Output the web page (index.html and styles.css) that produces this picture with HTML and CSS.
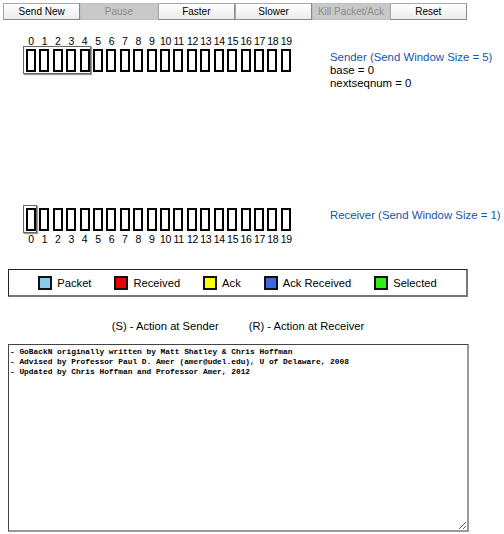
FILE: index.html
```html
<!DOCTYPE html>
<html>
<head>
<meta charset="utf-8">
<link rel="stylesheet" href="styles.css">
</head>
<body>
<div class="toolbar">
  <button class="btn">Send New</button>
  <button class="btn off">Pause</button>
  <button class="btn">Faster</button>
  <button class="btn">Slower</button>
  <button class="btn off">Kill Packet/Ack</button>
  <button class="btn">Reset</button>
</div>

<div class="panel sender">
  <div class="slots">
    <div class="nums">
      <span>0</span><span>1</span><span>2</span><span>3</span><span>4</span><span>5</span><span>6</span><span>7</span><span>8</span><span>9</span><span>10</span><span>11</span><span>12</span><span>13</span><span>14</span><span>15</span><span>16</span><span>17</span><span>18</span><span>19</span>
    </div>
    <div class="boxes">
      <i></i><i></i><i></i><i></i><i></i><i></i><i></i><i></i><i></i><i></i><i></i><i></i><i></i><i></i><i></i><i></i><i></i><i></i><i></i><i></i>
      <div class="window w5"></div>
    </div>
  </div>
  <div class="info">
    <div class="title">Sender (Send Window Size = 5)</div>
    <div>base = 0</div>
    <div>nextseqnum = 0</div>
  </div>
</div>

<div class="panel receiver">
  <div class="slots">
    <div class="boxes">
      <i></i><i></i><i></i><i></i><i></i><i></i><i></i><i></i><i></i><i></i><i></i><i></i><i></i><i></i><i></i><i></i><i></i><i></i><i></i><i></i>
      <div class="window w1"></div>
    </div>
    <div class="nums">
      <span>0</span><span>1</span><span>2</span><span>3</span><span>4</span><span>5</span><span>6</span><span>7</span><span>8</span><span>9</span><span>10</span><span>11</span><span>12</span><span>13</span><span>14</span><span>15</span><span>16</span><span>17</span><span>18</span><span>19</span>
    </div>
  </div>
  <div class="info">
    <div class="title">Receiver (Send Window Size = 1)</div>
  </div>
</div>

<div class="legend">
  <div class="item"><span class="sw packet"></span>Packet</div>
  <div class="item"><span class="sw received"></span>Received</div>
  <div class="item"><span class="sw ack"></span>Ack</div>
  <div class="item"><span class="sw ackrec"></span>Ack Received</div>
  <div class="item"><span class="sw selected"></span>Selected</div>
</div>

<div class="actions">
  <span>(S) - Action at Sender</span>
  <span>(R) - Action at Receiver</span>
</div>

<textarea class="log">- GoBackN originally written by Matt Shatley &amp; Chris Hoffman
- Advised by Professor Paul D. Amer (amer@udel.edu), U of Delaware, 2008
- Updated by Chris Hoffman and Professor Amer, 2012</textarea>
</body>
</html>
```

FILE: styles.css
```css
html, body {
  margin: 0;
  padding: 0;
  background: #fff;
  font-family: "Liberation Sans", Arial, sans-serif;
  color: #000;
}

.toolbar {
  display: flex;
  margin: 3px 0 0 3px;
  width: 464px;
}

.btn {
  flex: 1;
  height: 17px;
  margin: 0;
  padding: 0;
  font-family: "Liberation Sans", Arial, sans-serif;
  font-size: 10px;
  color: #000;
  background: linear-gradient(#ffffff, #ececec);
  border: 1px solid #a8a8a8;
  border-right-color: #8a8a8a;
  border-bottom-color: #8a8a8a;
}

.btn.off {
  background: #c9c9c9;
  color: #8e8e8e;
  border-color: #c0c0c0;
}

.panel {
  display: flex;
  padding-left: 23px;
}

.sender {
  margin-top: 16px;
}

.receiver {
  margin-top: 118px;
}

.slots {
  flex: 0 0 270px;
  padding-left: 3px;
}

.nums {
  display: grid;
  grid-template-columns: repeat(20, 13.42px);
  font-size: 10.5px;
  line-height: 11px;
  height: 11px;
}

.nums span {
  width: 10px;
  text-align: center;
  letter-spacing: -0.3px;
}

.boxes {
  position: relative;
  display: grid;
  grid-template-columns: repeat(20, 13.42px);
  height: 23px;
}

.sender .boxes {
  margin-top: 2px;
}

.receiver .boxes {
  margin-bottom: 3px;
}

.boxes i {
  display: block;
  width: 6px;
  height: 19px;
  border: 2px solid #000;
  background: #fff;
}

.window {
  position: absolute;
  top: -3px;
  left: -3px;
  height: 26px;
  border: 1px solid #666;
  box-shadow: 1px 1px 1px #999;
}

.w5 {
  width: 66px;
}

.w1 {
  width: 12px;
}

.info {
  flex: 0 0 auto;
  margin-left: 34px;
  font-size: 11.4px;
  line-height: 13px;
  white-space: nowrap;
}

.sender .info {
  padding-top: 15px;
}

.receiver .info {
  padding-top: 1px;
}

.title {
  color: #1155aa;
}

.legend {
  display: flex;
  justify-content: center;
  align-items: center;
  gap: 23px;
  margin: 24px 0 0 8px;
  width: 460px;
  height: 28px;
  border: 1px solid #222;
  border-right: 2px solid #777;
  border-bottom: 2px solid #777;
  box-sizing: border-box;
  font-size: 11.2px;
}

.item {
  display: flex;
  align-items: center;
}

.sw {
  display: inline-block;
  width: 10px;
  height: 10px;
  border: 2px solid #111;
  margin-right: 5px;
}

.packet { background: #88ccee; }
.received { background: #ee0000; }
.ack { background: #ffff00; }
.ackrec { background: #3f68e0; }
.selected { background: #33ee11; }

.actions {
  display: flex;
  justify-content: center;
  gap: 30px;
  width: 460px;
  margin: 22px 0 0 8px;
  font-size: 11.2px;
  line-height: 14px;
}

.log {
  display: block;
  margin: 11px 0 0 8px;
  width: 461px;
  height: 188px;
  box-sizing: border-box;
  padding: 2px 1px;
  border: 1px solid #444;
  border-right: 2px solid #999;
  border-bottom: 2px solid #999;
  font-family: "Liberation Mono", "Courier New", monospace;
  font-weight: bold;
  font-size: 7.85px;
  line-height: 10px;
  color: #000;
  background: #fff;
  resize: both;
  outline: none;
}
```
